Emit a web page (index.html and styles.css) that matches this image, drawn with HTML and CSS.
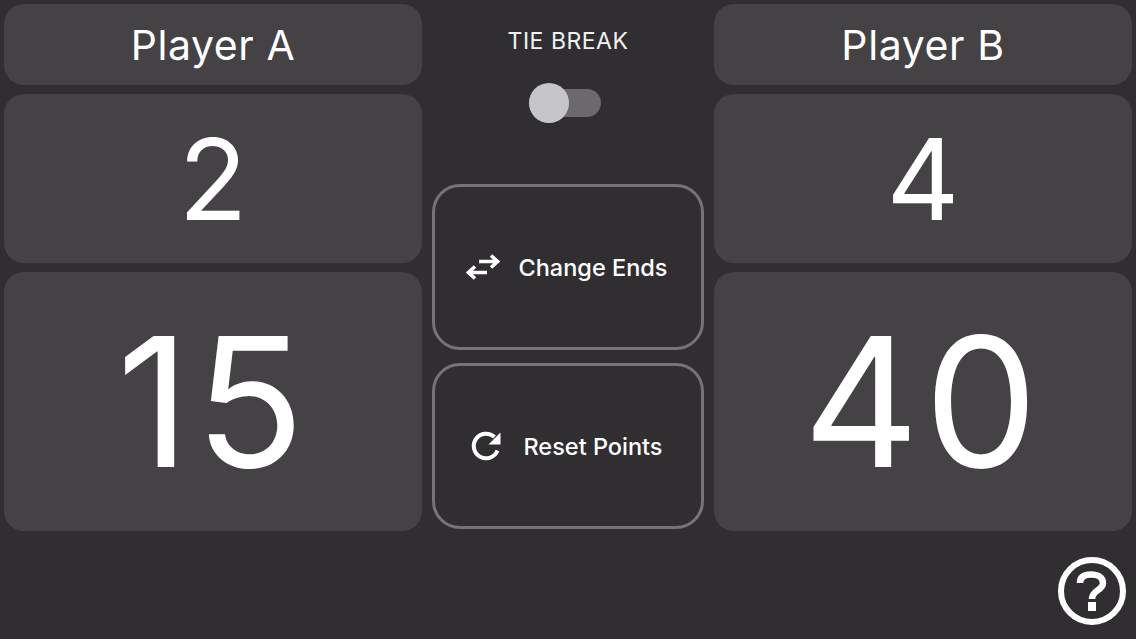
FILE: index.html
```html
<!DOCTYPE html>
<html>
<head>
    <title>Tennis Score</title>
    <link rel="stylesheet" href="styles.css">
</head>
<body>
    <div class="board">
        <div class="player">
            <div class="card name">Player A</div>
            <div class="card games">2</div>
            <div class="card points">15</div>
        </div>

        <div class="middle">
            <div class="tiebreak">
                <div class="tiebreak-label">TIE BREAK</div>
                <div class="switch"><div class="knob"></div></div>
            </div>
            <div class="action action-ends">
                <svg class="icon-ends" width="34" height="26" viewBox="0 0 34 26">
                    <path d="M13 7.500H30M25 1.500L31.500 7.500L25 13.500M21 18.500H4M9 12.500L2.500 18.500L9 24.500" fill="none" stroke="#fff" stroke-width="3.600"/>
                </svg>
                <span>Change Ends</span>
            </div>
            <div class="action action-reset">
                <svg class="icon-reset" width="32" height="32" viewBox="0 0 32 32">
                    <path d="M27.500 20.500A12.300 12.300 0 1 1 24.500 7" fill="none" stroke="#fff" stroke-width="4"/>
                    <path d="M30.500 2.500V14.500H18.500Z" fill="#fff"/>
                </svg>
                <span>Reset Points</span>
            </div>
        </div>

        <div class="player">
            <div class="card name">Player B</div>
            <div class="card games">4</div>
            <div class="card points">40</div>
        </div>
    </div>

    <svg class="help" width="68" height="68" viewBox="0 0 68 68">
        <circle cx="34" cy="34" r="31" fill="none" stroke="#fff" stroke-width="6"/>
        <path d="M22 26C22 19.500 27 17.500 33 17.500C40 17.500 45 20.500 45 26C45 33.500 34 33 34 42" fill="none" stroke="#fff" stroke-width="6.500"/>
        <rect x="30" y="45" width="8" height="9" fill="#fff"/>
    </svg>
</body>
</html>
```

FILE: styles.css
```css
body {
    margin: 0;
    height: 639px;
    overflow: hidden;
    position: relative;
    background-color: #302e31;
    color: #fff;
    font-family: Inter, "Liberation Sans", sans-serif;
}

.board {
    display: grid;
    grid-template-columns: 418px 272px 418px;
    gap: 10px;
    padding: 4px 4px 0 4px;
}

.player {
    display: flex;
    flex-direction: column;
    gap: 9px;
}

.card {
    display: flex;
    align-items: center;
    justify-content: center;
    background-color: #444245;
    border-radius: 20px;
}

.name {
    height: 81px;
    font-size: 41px;
    letter-spacing: 0.6px;
    padding-top: 1px;
    box-sizing: border-box;
}

.games {
    height: 169px;
    font-size: 113px;
    font-weight: 420;
}

.points {
    height: 259px;
    font-size: 180px;
    font-weight: 420;
    letter-spacing: 5px;
}

.middle {
    display: flex;
    flex-direction: column;
}

.tiebreak {
    height: 180px;
    display: flex;
    flex-direction: column;
    align-items: center;
}

.tiebreak-label {
    margin-top: 24px;
    font-size: 23px;
    line-height: 26px;
    letter-spacing: 0.5px;
    color: #f2f2f2;
}

.switch {
    position: relative;
    width: 72px;
    height: 28px;
    margin-top: 35px;
    margin-right: 6px;
    background-color: #6b696c;
    border-radius: 14px;
}

.knob {
    position: absolute;
    left: 0;
    top: -6px;
    width: 40px;
    height: 40px;
    background-color: #c6c5c7;
    border-radius: 50%;
}

.action {
    display: flex;
    align-items: center;
    justify-content: center;
    box-sizing: border-box;
    height: 166px;
    padding-right: 3px;
    border: 3px solid #757376;
    border-radius: 28px;
    font-size: 23.5px;
    font-weight: 500;
}

.action-reset {
    margin-top: 13px;
}

.icon-ends {
    margin-right: 19px;
}

.icon-reset {
    margin-right: 21px;
}

.help {
    position: absolute;
    right: 10px;
    bottom: 14px;
}
```
